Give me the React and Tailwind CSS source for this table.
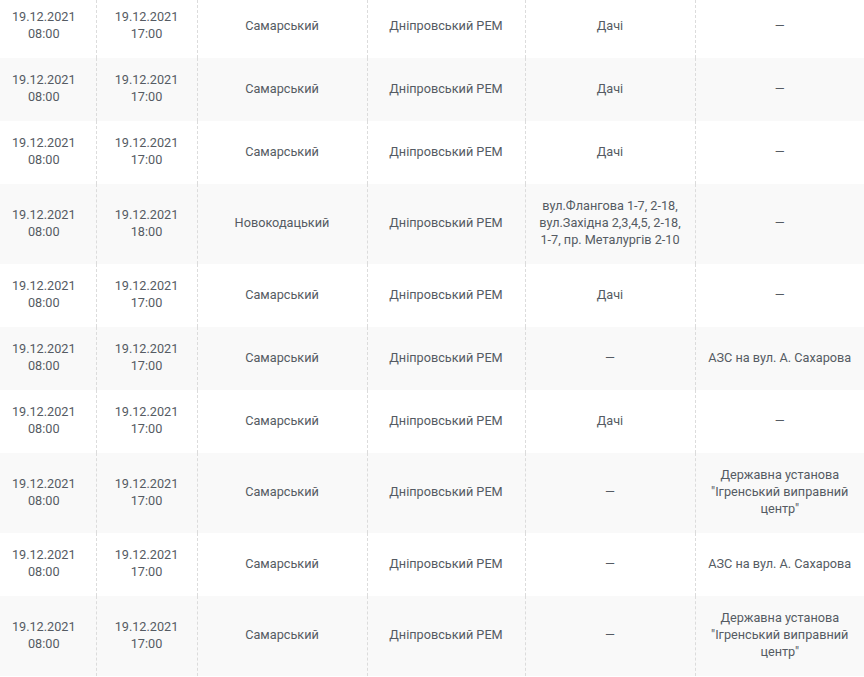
import React from 'react';

const SAM = 'Самарський';
const REM = 'Дніпровський РЕМ';
const DASH = '—';
const AZS = 'АЗС на вул. А. Сахарова';
const IGR = 'Державна установа "Ігренський виправний центр"';

const rows = [
  { end: '17:00', district: SAM, place: 'Дачі', obj: DASH },
  { end: '17:00', district: SAM, place: 'Дачі', obj: DASH },
  { end: '17:00', district: SAM, place: 'Дачі', obj: DASH },
  {
    end: '18:00',
    district: 'Новокодацький',
    place: 'вул.Флангова 1-7, 2-18, вул.Західна 2,3,4,5, 2-18, 1-7, пр. Металургів 2-10',
    obj: DASH,
  },
  { end: '17:00', district: SAM, place: 'Дачі', obj: DASH },
  { end: '17:00', district: SAM, place: DASH, obj: AZS },
  { end: '17:00', district: SAM, place: 'Дачі', obj: DASH },
  { end: '17:00', district: SAM, place: DASH, obj: IGR },
  { end: '17:00', district: SAM, place: DASH, obj: AZS },
  { end: '17:00', district: SAM, place: DASH, obj: IGR },
];

const cell = 'px-2 pt-[13px] pb-[16px] text-center align-middle border-r border-dashed border-[#dcdcdc] last:border-r-0';

export default function App() {
  return (
    <div className="w-[864px] h-[677px] overflow-hidden bg-white">
      <table
        className="w-[864px] table-fixed border-collapse mt-[-5px] text-[12.7px] leading-[17px] text-[#555b63]"
        style={{ fontFamily: 'Roboto, "Noto Sans", sans-serif' }}
      >
        <colgroup>
          <col className="w-[96px]" />
          <col className="w-[101px]" />
          <col className="w-[170px]" />
          <col className="w-[158px]" />
          <col className="w-[170px]" />
          <col className="w-[169px]" />
        </colgroup>
        <tbody>
          {rows.map((r, i) => (
            <tr key={i} className={i % 2 === 1 ? 'bg-[#f9f9f9]' : 'bg-white'}>
              <td className={`${cell} !pl-0`}>19.12.2021<br />08:00</td>
              <td className={cell}>19.12.2021<br />{r.end}</td>
              <td className={cell}>{r.district}</td>
              <td className={cell}>{REM}</td>
              <td className={cell}>{r.place}</td>
              <td className={cell}>{r.obj}</td>
            </tr>
          ))}
        </tbody>
      </table>
    </div>
  );
}
